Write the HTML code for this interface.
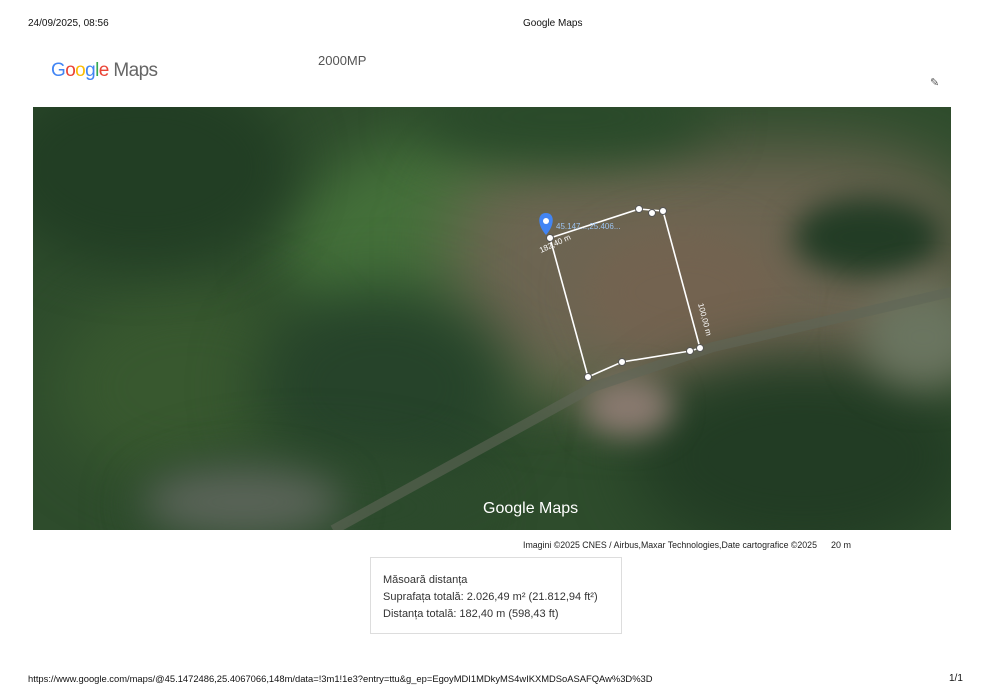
<!DOCTYPE html>
<html><head><style>
body{margin:0;width:990px;height:700px;background:#fff;position:relative;font-family:"Liberation Sans",sans-serif;overflow:hidden}
.a{position:absolute;white-space:nowrap}
#map{position:absolute;left:33px;top:107px;width:918px;height:423px;overflow:hidden;background:#2e4c2c}
#map div{position:absolute;border-radius:50%}
</style></head><body>
<div class="a" style="left:28px;top:18px;font-size:10px;color:#111">24/09/2025, 08:56</div>
<div class="a" style="left:523px;top:18px;font-size:10px;color:#111">Google Maps</div>
<div class="a" style="left:51px;top:60px;font-size:19px;letter-spacing:-0.6px"><span style="color:#4285f4">G</span><span style="color:#ea4335">o</span><span style="color:#fbbc05">o</span><span style="color:#4285f4">g</span><span style="color:#34a853">l</span><span style="color:#ea4335">e</span> <span style="color:#666">Maps</span></div>
<div class="a" style="left:318px;top:53px;font-size:13px;color:#555">2000MP</div>
<div class="a" style="left:930px;top:76px;font-size:11px;color:#555">✎</div>
<div id="map">
<div style="left:250px;top:20px;width:420px;height:260px;background:#44703a;filter:blur(30px)"></div>
<div style="left:420px;top:40px;width:520px;height:250px;background:#6d6552;filter:blur(35px);border-radius:30%"></div>
<div style="left:550px;top:120px;width:200px;height:130px;background:#736350;filter:blur(20px)"></div>
<div style="left:20px;top:180px;width:280px;height:200px;background:#38582f;filter:blur(30px)"></div>
<div style="left:-40px;top:-40px;width:300px;height:200px;background:#223e24;filter:blur(25px)"></div>
<div style="left:380px;top:-40px;width:300px;height:100px;background:#2a4a2a;filter:blur(25px)"></div>
<div style="left:220px;top:180px;width:260px;height:200px;background:#26432a;filter:blur(30px)"></div>
<div style="left:600px;top:250px;width:340px;height:200px;background:#223c24;filter:blur(30px)"></div>
<div style="left:760px;top:90px;width:150px;height:80px;background:#223c25;filter:blur(15px)"></div>
<div style="left:100px;top:340px;width:350px;height:120px;background:#2c4a2c;filter:blur(25px)"></div>
<div style="left:550px;top:270px;width:90px;height:60px;background:#8a7a70;filter:blur(15px)"></div>
<div style="left:110px;top:360px;width:200px;height:70px;background:#5a6458;filter:blur(20px)"></div>
<div style="left:830px;top:180px;width:120px;height:100px;background:#6a7560;filter:blur(20px)"></div>
<svg style="position:absolute;left:0;top:0" width="918" height="423">
<path d="M300 423 L560 280 L680 240 L918 185" stroke="#5f6656" stroke-width="10" fill="none" opacity=".6"/>
<g stroke="#fff" stroke-width="1.6" fill="none">
<polygon points="517,131 606,102 630,104 667,241 657,244 589,255 555,270"/>
</g>
<g fill="#fff" stroke="#555" stroke-width="1"><circle cx="517" cy="131" r="3.5"/><circle cx="606" cy="102" r="3.5"/><circle cx="619" cy="106" r="3.5"/><circle cx="630" cy="104" r="3.5"/><circle cx="667" cy="241" r="3.5"/><circle cx="657" cy="244" r="3.5"/><circle cx="589" cy="255" r="3.5"/><circle cx="555" cy="270" r="3.5"/></g>
<path d="M513 128 C504 118 504 106 513 106 C522 106 522 118 513 128Z" fill="#4285f4"/><circle cx="513" cy="114" r="3" fill="#fff"/>
<text x="523" y="122" font-size="8" fill="#9cc3f0" font-family="Liberation Sans">45.147...,25.406...</text>
<text x="508" y="146" font-size="8" fill="#fff" font-family="Liberation Sans" transform="rotate(-25 508 146)">182,40 m</text>
<text x="665" y="197" font-size="8" fill="#fff" font-family="Liberation Sans" transform="rotate(75 665 197)">100,00 m</text>
<text x="450" y="406" font-size="16" fill="#fff" font-family="Liberation Sans">Google Maps</text>
</svg>
</div>
<div class="a" style="left:523px;top:540px;font-size:8.8px;color:#222">Imagini ©2025 CNES / Airbus,Maxar Technologies,Date cartografice ©2025</div>
<div class="a" style="left:831px;top:540px;font-size:9px;color:#222">20 m</div>
<div style="position:absolute;left:370px;top:557px;width:250px;height:75px;border:1px solid #ddd"></div>
<div class="a" style="left:383px;top:572px;font-size:11px;color:#333;line-height:17px">Măsoară distanța<br>Suprafața totală: 2.026,49 m² (21.812,94 ft²)<br>Distanța totală: 182,40 m (598,43 ft)</div>
<div class="a" style="left:28px;top:673px;font-size:9.4px;color:#111">https://www.google.com/maps/@45.1472486,25.4067066,148m/data=!3m1!1e3?entry=ttu&amp;g_ep=EgoyMDI1MDkyMS4wIKXMDSoASAFQAw%3D%3D</div>
<div class="a" style="left:949px;top:673px;font-size:10px;color:#111">1/1</div>
</body></html>
